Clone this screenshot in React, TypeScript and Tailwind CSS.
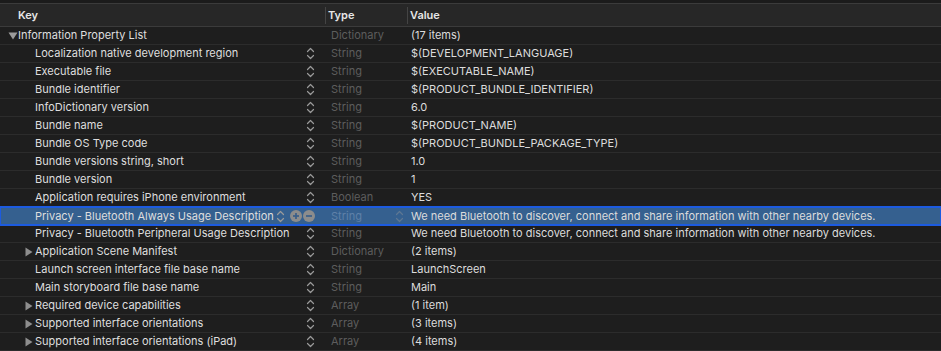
import React from 'react';

type Row = {
  key: string;
  type: string;
  value: string;
  level: 0 | 1;
  expandable?: boolean;
  open?: boolean;
  selected?: boolean;
};

const rows: Row[] = [
  { key: 'Information Property List', type: 'Dictionary', value: '(17 items)', level: 0, expandable: true, open: true },
  { key: 'Localization native development region', type: 'String', value: '$(DEVELOPMENT_LANGUAGE)', level: 1 },
  { key: 'Executable file', type: 'String', value: '$(EXECUTABLE_NAME)', level: 1 },
  { key: 'Bundle identifier', type: 'String', value: '$(PRODUCT_BUNDLE_IDENTIFIER)', level: 1 },
  { key: 'InfoDictionary version', type: 'String', value: '6.0', level: 1 },
  { key: 'Bundle name', type: 'String', value: '$(PRODUCT_NAME)', level: 1 },
  { key: 'Bundle OS Type code', type: 'String', value: '$(PRODUCT_BUNDLE_PACKAGE_TYPE)', level: 1 },
  { key: 'Bundle versions string, short', type: 'String', value: '1.0', level: 1 },
  { key: 'Bundle version', type: 'String', value: '1', level: 1 },
  { key: 'Application requires iPhone environment', type: 'Boolean', value: 'YES', level: 1 },
  { key: 'Privacy - Bluetooth Always Usage Description', type: 'String', value: 'We need Bluetooth to discover, connect and share information with other nearby devices.', level: 1, selected: true },
  { key: 'Privacy - Bluetooth Peripheral Usage Description', type: 'String', value: 'We need Bluetooth to discover, connect and share information with other nearby devices.', level: 1 },
  { key: 'Application Scene Manifest', type: 'Dictionary', value: '(2 items)', level: 1, expandable: true },
  { key: 'Launch screen interface file base name', type: 'String', value: 'LaunchScreen', level: 1 },
  { key: 'Main storyboard file base name', type: 'String', value: 'Main', level: 1 },
  { key: 'Required device capabilities', type: 'Array', value: '(1 item)', level: 1, expandable: true },
  { key: 'Supported interface orientations', type: 'Array', value: '(3 items)', level: 1, expandable: true },
  { key: 'Supported interface orientations (iPad)', type: 'Array', value: '(4 items)', level: 1, expandable: true },
];

function Stepper({ dim }: { dim?: boolean }) {
  return (
    <svg width="9" height="13" viewBox="0 0 9 13" fill="none" className={dim ? 'opacity-40' : ''}>
      <path d="M1.5 4.5 L4.5 1.5 L7.5 4.5" stroke="#9a9a9a" strokeWidth="1.2" strokeLinecap="round" strokeLinejoin="round" />
      <path d="M1.5 8.5 L4.5 11.5 L7.5 8.5" stroke="#9a9a9a" strokeWidth="1.2" strokeLinecap="round" strokeLinejoin="round" />
    </svg>
  );
}

function Disclosure({ open }: { open?: boolean }) {
  return open ? (
    <svg width="10" height="8" viewBox="0 0 10 8">
      <path d="M0.5 0.5 L9.5 0.5 L5 7.5 Z" fill="#9b9b9b" />
    </svg>
  ) : (
    <svg width="8" height="10" viewBox="0 0 8 10">
      <path d="M0.5 0.5 L7.5 5 L0.5 9.5 Z" fill="#8e8e8e" />
    </svg>
  );
}

function RoundButton({ minus }: { minus?: boolean }) {
  return (
    <svg width="12" height="12" viewBox="0 0 12 12">
      <circle cx="6" cy="6" r="6" fill="#8c8c8c" />
      <path d="M3 6 H9" stroke="#3a5f8a" strokeWidth="1.7" />
      {!minus && <path d="M6 3 V9" stroke="#3a5f8a" strokeWidth="1.7" />}
    </svg>
  );
}

function PlistRow({ row }: { row: Row }) {
  return (
    <div
      className={
        'flex h-[18px] items-center text-[11px] leading-[17px] ' +
        (row.selected
          ? 'relative z-10 bg-[#35608f] outline-2 -outline-offset-1 outline-[#1c5be0]'
          : 'border-b border-[#2c2c2c]')
      }
    >
      <div className="flex w-[325px] shrink-0 items-center pr-[10px]">
        <div className={'flex shrink-0 items-center ' + (row.level === 0 ? 'w-[18px] pl-[8px]' : 'w-[35px] pl-[25px]')}>
          {row.expandable && <Disclosure open={row.open} />}
        </div>
        <span className="flex-1 truncate text-[#dedede]">{row.key}</span>
        {row.level === 1 && (
          <div className="flex items-center gap-[3px]">
            <Stepper />
            {row.selected && (
              <div className="ml-[2px] flex items-center gap-[1px]">
                <RoundButton />
                <RoundButton minus />
              </div>
            )}
          </div>
        )}
      </div>
      <div className="flex w-[82px] shrink-0 items-center pl-[6px] pr-[3px]">
        <span className={'flex-1 ' + (row.selected ? 'text-[#5f81a8]' : 'text-[#5d5d5d]')}>{row.type}</span>
        {row.selected && <Stepper dim />}
      </div>
      <div className="flex-1 truncate pl-[4px] text-[#dcdcdc]">{row.value}</div>
    </div>
  );
}

export default function App() {
  return (
    <div
      className="h-[351px] w-[941px] overflow-hidden bg-[#1e1e1e]"
      style={{ fontFamily: 'Inter, "Noto Sans", sans-serif' }}
    >
      <div className="h-[3px] bg-[#1b1b1b]" />
      <div className="flex h-[24px] items-center border-y border-[#3b3b3b] bg-[#272727] text-[11px] font-semibold text-[#e6e6e6]">
        <div className="w-[325px] shrink-0 pl-[18px]">Key</div>
        <div className="flex h-[17px] w-[82px] shrink-0 items-center border-l border-[#444] pl-[2px]">Type</div>
        <div className="flex h-[17px] flex-1 items-center border-l border-[#444] pl-[2px]">Value</div>
      </div>
      {rows.map((r) => (
        <PlistRow key={r.key} row={r} />
      ))}
    </div>
  );
}
